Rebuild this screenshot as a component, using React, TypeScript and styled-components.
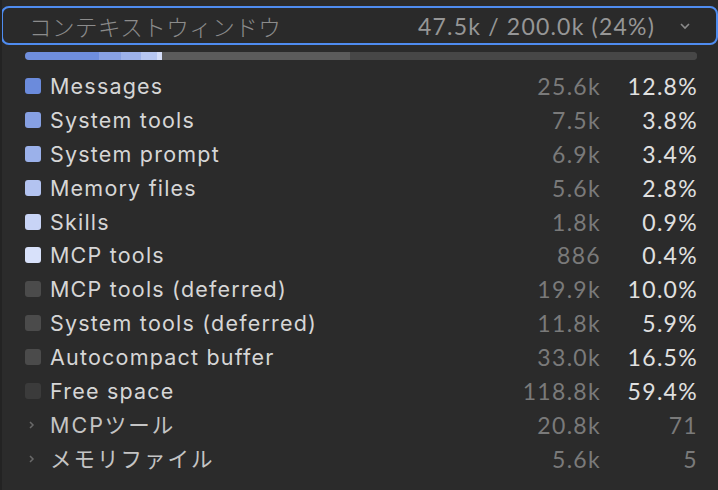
import React from "react";
import styled, { createGlobalStyle } from "styled-components";

const Global = createGlobalStyle`
  html, body { margin: 0; padding: 0; background: #2b2b2b; }
  body { font-family: Inter, "Noto Sans CJK JP", sans-serif; }
  * { box-sizing: border-box; }
`;

const Panel = styled.div`
  width: 718px;
  height: 490px;
  background: #2b2b2b;
  border-left: 2px solid #232323;
  overflow: hidden;
`;

const Header = styled.button`
  display: flex;
  align-items: center;
  width: 717px;
  height: 39px;
  margin: 6px 0 0 -1px;
  padding: 0 25px 0 26px;
  background: #2a2a2a;
  border: 2px solid #4f8cf0;
  border-radius: 8px;
  cursor: pointer;
`;

const Title = styled.span`
  flex: 1;
  text-align: left;
  font-family: "Noto Sans CJK JP", sans-serif;
  font-size: 22.5px;
  font-weight: 300;
  color: #8c8c8c;
  letter-spacing: 0.5px;
`;

const Usage = styled.span`
  font-family: Lato, sans-serif;
  font-size: 23px;
  letter-spacing: 1.2px;
  color: #969696;
  margin-right: 24px;
`;

const Chevron = styled.svg`
  width: 12px;
  height: 8px;
  stroke: #8a8a8a;
  fill: none;
  stroke-width: 1.6;
`;

const Bar = styled.div`
  display: flex;
  height: 8px;
  margin: 7px 21px 9px 23px;
  border-radius: 4px;
  overflow: hidden;
  background: #464646;
`;

const Segment = styled.div<{ $color: string }>`
  height: 100%;
  background: ${(p) => p.$color};
`;

const List = styled.div`
  display: flex;
  flex-direction: column;
  padding: 0 20px 0 23px;
`;

const Row = styled.div`
  display: grid;
  grid-template-columns: 16px 1fr auto 88px;
  align-items: center;
  column-gap: 9px;
  height: 33.9px;
`;

const Swatch = styled.span<{ $color: string }>`
  width: 16px;
  height: 16px;
  border-radius: 3px;
  background: ${(p) => p.$color};
`;

const Caret = styled.svg`
  width: 16px;
  height: 14px;
  stroke: #696969;
  fill: none;
  stroke-width: 1.5;
`;

const Label = styled.span`
  font-size: 21.5px;
  letter-spacing: 1.2px;
  color: #d6d6d6;
  white-space: nowrap;
`;

const GroupLabel = styled(Label)`
  color: #c4c4c4;
  letter-spacing: 2px;
  margin-bottom: 4px;
`;

const Count = styled.span`
  font-family: Lato, sans-serif;
  font-size: 23px;
  letter-spacing: 1.3px;
  color: #7a7a7a;
  text-align: right;
`;

const Share = styled.span<{ $muted?: boolean }>`
  font-family: Lato, sans-serif;
  font-size: 23px;
  letter-spacing: 1.3px;
  color: ${(p) => (p.$muted ? "#7a7a7a" : "#e0e0e0")};
  text-align: right;
`;

type Item = { label: string; color: string; count: string; pct: string };

const items: Item[] = [
  { label: "Messages", color: "#6b8bdc", count: "25.6k", pct: "12.8%" },
  { label: "System tools", color: "#86a0e3", count: "7.5k", pct: "3.8%" },
  { label: "System prompt", color: "#9bb1ea", count: "6.9k", pct: "3.4%" },
  { label: "Memory files", color: "#b3c3f0", count: "5.6k", pct: "2.8%" },
  { label: "Skills", color: "#c8d4f6", count: "1.8k", pct: "0.9%" },
  { label: "MCP tools", color: "#d8e1fa", count: "886", pct: "0.4%" },
  { label: "MCP tools (deferred)", color: "#4b4b4b", count: "19.9k", pct: "10.0%" },
  { label: "System tools (deferred)", color: "#4b4b4b", count: "11.8k", pct: "5.9%" },
  { label: "Autocompact buffer", color: "#4b4b4b", count: "33.0k", pct: "16.5%" },
  { label: "Free space", color: "#3b3b3b", count: "118.8k", pct: "59.4%" },
];

const groups = [
  { label: "MCPツール", count: "20.8k", n: "71" },
  { label: "メモリファイル", count: "5.6k", n: "5" },
];

// bar segments as share of the track width
const segments = [
  { w: 74, color: "#6f8edd" },
  { w: 22, color: "#88a1e3" },
  { w: 20, color: "#9db2ea" },
  { w: 16, color: "#b6c6f1" },
  { w: 5, color: "#d4ddf8" },
  { w: 188, color: "#5b5b5b" },
  { w: 347, color: "#474747" },
];
const total = segments.reduce((s, x) => s + x.w, 0);

export default function App() {
  return (
    <>
      <Global />
      <Panel>
        <Header>
          <Title>コンテキストウィンドウ</Title>
          <Usage>47.5k / 200.0k (24%)</Usage>
          <Chevron viewBox="0 0 12 8">
            <path d="M2 2l4 4 4-4" />
          </Chevron>
        </Header>
        <Bar>
          {segments.map((s, i) => (
            <Segment key={i} $color={s.color} style={{ width: `${(s.w / total) * 100}%` }} />
          ))}
        </Bar>
        <List>
          {items.map((it) => (
            <Row key={it.label}>
              <Swatch $color={it.color} />
              <Label>{it.label}</Label>
              <Count>{it.count}</Count>
              <Share>{it.pct}</Share>
            </Row>
          ))}
          {groups.map((g) => (
            <Row key={g.label}>
              <Caret viewBox="0 0 16 14">
                <path d="M5 4l3 3-3 3" />
              </Caret>
              <GroupLabel>{g.label}</GroupLabel>
              <Count>{g.count}</Count>
              <Share $muted>{g.n}</Share>
            </Row>
          ))}
        </List>
      </Panel>
    </>
  );
}
